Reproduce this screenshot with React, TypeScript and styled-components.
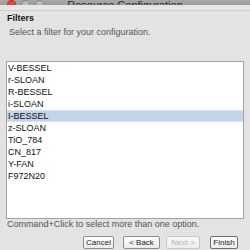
import styled, { createGlobalStyle } from "styled-components";

const filters = [
  "V-BESSEL",
  "r-SLOAN",
  "R-BESSEL",
  "i-SLOAN",
  "I-BESSEL",
  "z-SLOAN",
  "TiO_784",
  "CN_817",
  "Y-FAN",
  "F972N20",
];

const selected = "I-BESSEL";

const Global = createGlobalStyle`
  html, body {
    margin: 0;
    padding: 0;
    background: #e3e3e3;
  }
  * {
    box-sizing: border-box;
  }
`;

function App() {
  return (
    <>
      <Global />
      <Window>
        <TitleBar>
          <Lights>
            <Light $color="#e2463f" />
            <Light $color="#b9b9b9" />
            <Light $color="#b9b9b9" />
          </Lights>
          <Title>Resource Configuration</Title>
          <div />
        </TitleBar>
        <Band />
        <Header>
          <Heading>Filters</Heading>
          <Description>Select a filter for your configuration.</Description>
        </Header>
        <List>
          {filters.map((name) => (
            <Row key={name} $selected={name === selected}>
              {name}
            </Row>
          ))}
        </List>
        <Hint>Command+Click to select more than one option.</Hint>
        <ButtonRow>
          <Button $w={31}>Cancel</Button>
          <Button $w={37} $gap={9}>&lt; Back</Button>
          <Button $w={34} $gap={6} disabled>
            Next &gt;
          </Button>
          <Button $w={28} $gap={10} $default>
            Finish
          </Button>
        </ButtonRow>
      </Window>
    </>
  );
}

const Window = styled.div`
  width: 250px;
  height: 250px;
  display: flex;
  flex-direction: column;
  background: #e3e3e3;
  font-family: "Liberation Sans", Arial, sans-serif;
  color: #1a1a1a;
  overflow: hidden;
`;

const TitleBar = styled.div`
  height: 5px;
  flex: none;
  display: grid;
  grid-template-columns: 1fr auto 1fr;
  align-items: end;
  background: linear-gradient(#a9a9a9, #9b9b9b);
  overflow: hidden;
`;

const Lights = styled.div`
  display: flex;
  gap: 5px;
  padding-left: 7px;
  align-items: flex-end;
  margin-bottom: 1px;
`;

const Light = styled.span<{ $color: string }>`
  width: 9px;
  height: 9px;
  border-radius: 50%;
  background: ${(p) => p.$color};
  border: 1px solid rgba(0, 0, 0, 0.25);
`;

const Title = styled.div`
  font-size: 11px;
  line-height: 11px;
  color: #2e2e2e;
  margin-bottom: -1px;
  white-space: nowrap;
`;

const Band = styled.div`
  height: 6px;
  flex: none;
  background: #e6e6e6;
  border-bottom: 1px solid #cdcdcd;
`;

const Header = styled.div`
  height: 50px;
  flex: none;
  padding: 2px 0 0 7px;
`;

const Heading = styled.div`
  font-size: 9px;
  line-height: 11px;
  font-weight: bold;
  color: #111;
`;

const Description = styled.div`
  font-size: 9px;
  line-height: 11px;
  margin: 3px 0 0 2px;
  color: #555;
`;

const List = styled.div`
  height: 158px;
  width: 238px;
  margin-left: 6px;
  flex: none;
  background: #fff;
  border: 1px solid #a3a3a3;
`;

const Row = styled.div<{ $selected?: boolean }>`
  height: 12px;
  line-height: 12px;
  font-size: 9px;
  padding-left: 1px;
  color: #111;
  background: ${(p) => (p.$selected ? "#c4d4e8" : "transparent")};
  box-shadow: ${(p) =>
    p.$selected ? "inset 0 1px 0 #d6e1ee, inset 0 -1px 0 #d6e1ee" : "none"};
`;

const Hint = styled.div`
  font-size: 9px;
  line-height: 11px;
  padding-left: 7px;
  color: #555;
`;

const ButtonRow = styled.div`
  display: flex;
  justify-content: flex-end;
  margin-top: 6px;
  padding-right: 12px;
`;

const Button = styled.button<{ $w: number; $gap?: number; $default?: boolean }>`
  width: ${(p) => p.$w}px;
  height: 13px;
  margin-left: ${(p) => p.$gap ?? 0}px;
  padding: 0;
  font-family: "Liberation Sans", Arial, sans-serif;
  font-size: 8px;
  line-height: 11px;
  color: #1a1a1a;
  background: linear-gradient(#fdfdfd, #ebebeb);
  border: 1px solid ${(p) => (p.$default ? "#6f6f6f" : "#8c8c8c")};
  border-radius: 2px;
  &:disabled {
    color: #b3b3b3;
    border-color: #c6c6c6;
    background: linear-gradient(#f7f7f7, #ededed);
  }
`;

export default App;
